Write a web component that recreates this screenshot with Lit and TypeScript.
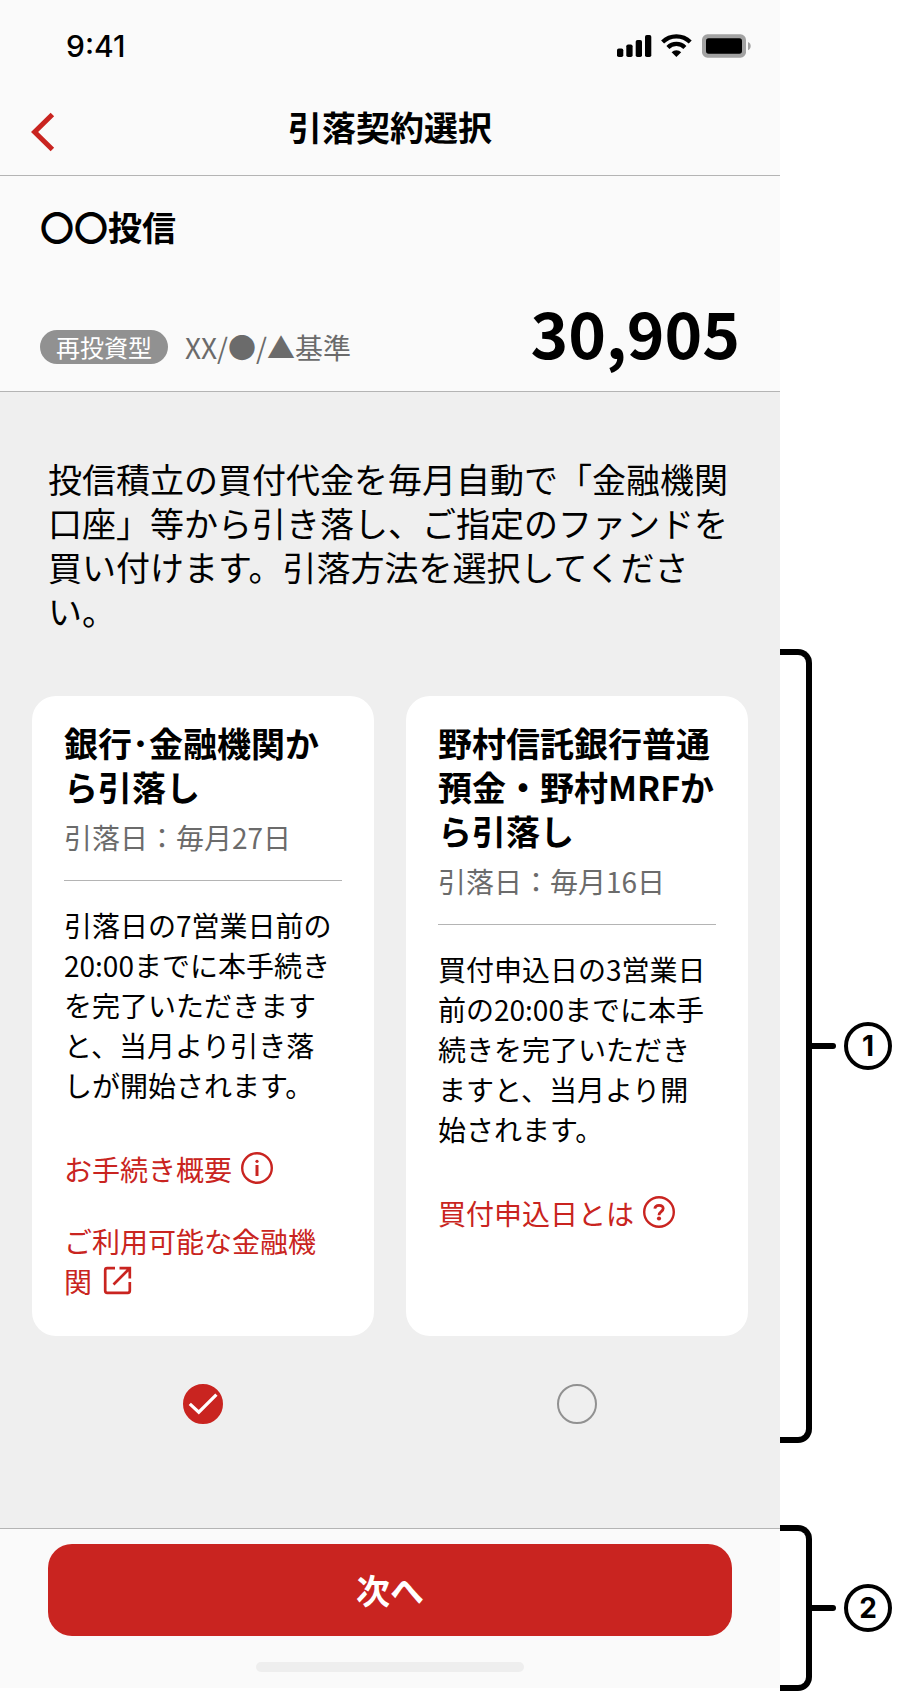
import { LitElement, html, css, svg, nothing } from "lit";
import { customElement, property, state } from "lit/decorators.js";

const baseText = css`
  :host {
    display: block;
    font-family: "Noto Sans CJK JP", "Noto Sans", sans-serif;
    color: #000;
  }
  * {
    box-sizing: border-box;
  }
  h1, h2, h3, p {
    margin: 0;
  }
`;

type IconName = "info" | "help" | "external";

const icons: Record<IconName, unknown> = {
  info: svg`
    <circle cx="16" cy="16" r="14.8" fill="none" stroke="currentColor" stroke-width="2.4"/>
    <circle cx="16" cy="9.3" r="1.6" fill="currentColor"/>
    <path d="M16 13v11" fill="none" stroke="currentColor" stroke-width="3"/>`,
  help: svg`
    <circle cx="16" cy="16" r="14.8" fill="none" stroke="currentColor" stroke-width="2.4"/>
    <path d="M11.8 12.6C12.1 10.5 13.7 9.3 16 9.3c2.5 0 4.2 1.4 4.2 3.3 0 3-4.2 3.1-4.2 6.6" fill="none" stroke="currentColor" stroke-width="2.8"/>
    <circle cx="16" cy="22.5" r="2.1" fill="currentColor"/>`,
  external: svg`
    <path d="M14 4.2H6.2a2 2 0 0 0-2 2v20.6a2 2 0 0 0 2 2h20.6a2 2 0 0 0 2-2V18" fill="none" stroke="currentColor" stroke-width="2.7"/>
    <path d="M18.5 4.2h10.3v10.3M28 5 12.5 20.5" fill="none" stroke="currentColor" stroke-width="2.7"/>`,
};

interface PlanLink {
  text: string;
  icon: IconName;
}

interface Plan {
  id: string;
  title: string;
  date: string;
  body: string;
  links: PlanLink[];
}

const plans: Plan[] = [
  {
    id: "bank",
    title: "銀行･金融機関から引落し",
    date: "引落日：毎月27日",
    body: "引落日の7営業日前の20:00までに本手続きを完了いただきますと、当月より引き落しが開始されます。",
    links: [
      { text: "お手続き概要", icon: "info" },
      { text: "ご利用可能な金融機関", icon: "external" },
    ],
  },
  {
    id: "trust",
    title: "野村信託銀行普通預金・野村MRFから引落し",
    date: "引落日：毎月16日",
    body: "買付申込日の3営業日前の20:00までに本手続きを完了いただきますと、当月より開始されます。",
    links: [{ text: "買付申込日とは", icon: "help" }],
  },
];

@customElement("status-bar")
class StatusBar extends LitElement {
  static styles = [
    baseText,
    css`
      .bar {
        display: flex;
        justify-content: space-between;
        align-items: center;
        height: 92px;
        padding: 0 28px 0 66px;
      }
      .time {
        font: 500 30px/36px Inter, sans-serif;
      }
      .icons {
        display: block;
        width: 136px;
        height: 24px;
      }
    `,
  ];

  render() {
    return html`
      <div class="bar">
        <span class="time">9:41</span>
        <svg class="icons" viewBox="0 0 136 24" aria-hidden="true">
          <rect x="1" y="14.5" width="6.3" height="8.5" rx="1.8"/>
          <rect x="10.3" y="10.5" width="6.3" height="12.5" rx="1.8"/>
          <rect x="19.7" y="6" width="6.3" height="17" rx="1.8"/>
          <rect x="29" y="1" width="6.3" height="22" rx="1.8"/>
          <g fill="none" stroke="#000" stroke-width="4.2">
            <path d="M46.6 8.1a19.4 19.4 0 0 1 27.6 0"/>
            <path d="M51.9 13.4a12 12 0 0 1 17 0"/>
          </g>
          <path d="M55.6 18.2a7 7 0 0 1 9.6 0L60.4 23Z"/>
          <rect x="86" y="0.3" width="44" height="23.4" rx="5.5" fill="#a2a2a2"/>
          <rect x="90" y="4.3" width="36" height="15.4" rx="2.6"/>
          <path d="M132 8c3.6 1.2 3.6 7 0 8.2Z" fill="#a2a2a2"/>
        </svg>
      </div>
    `;
  }
}

@customElement("plan-card")
class PlanCard extends LitElement {
  @property({ attribute: false }) plan!: Plan;
  @property({ type: Boolean }) selected = false;

  static styles = [
    baseText,
    css`
      :host {
        display: flex;
        flex-direction: column;
        gap: 48px;
      }
      .card {
        flex: 1;
        padding: 25px 32px 35px;
        border-radius: 24px;
        background: #fff;
      }
      .title {
        font-size: 34px;
        line-height: 44px;
        font-weight: 700;
      }
      .date {
        margin-top: 8px;
        padding-bottom: 23px;
        border-bottom: 1px solid #b4b4b4;
        font-size: 28px;
        line-height: 40px;
        color: #6b6b6b;
      }
      .body {
        margin: 24px 0 44px;
        font-size: 28px;
        line-height: 40px;
      }
      .links {
        display: flex;
        flex-direction: column;
        align-items: flex-start;
        gap: 32px;
      }
      .link {
        font-size: 28px;
        line-height: 40px;
        color: #c92420;
        text-decoration: none;
      }
      .icon {
        width: 32px;
        height: 32px;
        margin: 0 0 0 9px;
        vertical-align: -3px;
      }
      .pick {
        display: grid;
        align-self: center;
        cursor: pointer;
      }
      .radio,
      .tick {
        grid-area: 1 / 1;
        width: 40px;
        height: 40px;
        margin: 0;
      }
      .radio {
        appearance: none;
        border: 2px solid #919191;
        border-radius: 50%;
      }
      .radio:checked {
        border-color: #c92420;
        background: #c92420;
      }
      .tick {
        z-index: 1;
        pointer-events: none;
      }
    `,
  ];

  private choose() {
    this.dispatchEvent(new CustomEvent("choose", { detail: this.plan.id }));
  }

  render() {
    const { title, date, body, links } = this.plan;
    return html`
      <article class="card">
        <h3 class="title" id="title">${title}</h3>
        <p class="date">${date}</p>
        <p class="body">${body}</p>
        <div class="links">
          ${links.map(
            (l) => html`<a class="link" href="#">${l.text}<svg class="icon" viewBox="0 0 32 32" aria-hidden="true">${icons[l.icon]}</svg></a>`,
          )}
        </div>
      </article>
      <label class="pick">
        <input
          class="radio"
          type="radio"
          name="plan"
          aria-labelledby="title"
          .checked=${this.selected}
          @change=${this.choose}
        />
        ${this.selected
          ? html`<svg class="tick" viewBox="0 0 40 40" aria-hidden="true">
              <path d="M6.8 19.8 15.8 28.2 33.4 10.6" fill="none" stroke="#fff" stroke-width="3.2"/>
            </svg>`
          : nothing}
      </label>
    `;
  }
}

@customElement("note-bracket")
class NoteBracket extends LitElement {
  @property() number = "";

  static styles = [
    baseText,
    css`
      :host {
        display: flex;
        align-items: center;
      }
      .bracket {
        align-self: stretch;
        width: 32px;
        border: 6px solid #000;
        border-left: 0;
        border-radius: 0 14px 14px 0;
      }
      .tick {
        width: 24px;
        height: 6px;
        margin-right: 8px;
        border-radius: 0 3px 3px 0;
        background: #000;
      }
      .number {
        width: 48px;
        height: 48px;
        border: 4px solid #000;
        border-radius: 50%;
        font: 700 28px/40px Inter, sans-serif;
        text-align: center;
      }
    `,
  ];

  render() {
    return html`
      <span class="bracket"></span>
      <span class="tick"></span>
      <span class="number">${this.number}</span>
    `;
  }
}

@customElement("app-root")
class AppRoot extends LitElement {
  @state() private selected = "bank";

  static styles = [
    baseText,
    css`
      .page {
        display: grid;
        grid-template-columns: minmax(0, 1fr) 136px;
        padding-bottom: 3px;
        background: #fff;
      }
      .top,
      .options,
      .spacer,
      .footer {
        grid-column: 1;
      }
      .top,
      .options,
      .spacer {
        background: #efefef;
      }
      .nav,
      .fund,
      .footer {
        background: #fafafa;
      }
      .nav,
      .fund {
        border-bottom: 1px solid #b4b4b4;
      }
      .nav-row {
        display: grid;
        grid-template-columns: 40px 1fr 40px;
        padding: 13px 24px 20px;
      }
      .back {
        width: 40px;
        height: 50px;
        padding: 0;
        border: 0;
        background: none;
        cursor: pointer;
      }
      .chevron {
        display: block;
        width: 40px;
        height: 50px;
      }
      .title,
      .fund-name {
        font-size: 34px;
        line-height: 44px;
        font-weight: 700;
      }
      .title {
        text-align: center;
      }
      .fund {
        padding: 29px 40px 24px;
      }
      .fund-row {
        display: flex;
        align-items: flex-end;
        justify-content: space-between;
        margin-top: 46px;
      }
      .fund-meta {
        display: flex;
        align-items: center;
        gap: 17px;
      }
      .badge {
        padding: 0 16px;
        border-radius: 17px;
        background: #919191;
        color: #fff;
        font-size: 24px;
        line-height: 34px;
      }
      .basis {
        font-size: 28px;
        line-height: 40px;
        color: #6b6b6b;
      }
      .price {
        font-size: 64px;
        line-height: 72px;
        font-weight: 700;
      }
      .lead {
        padding: 65px 48px 16px;
        font-size: 34px;
        line-height: 44px;
      }
      .options {
        display: grid;
        grid-template-columns: 1fr 1fr;
        gap: 32px;
        padding: 47px 32px 19px;
      }
      .spacer {
        height: 85px;
      }
      .footer {
        padding: 15px 48px 16px;
        border-top: 1px solid #b4b4b4;
      }
      .next {
        display: block;
        width: 100%;
        height: 92px;
        padding: 0;
        border: 0;
        border-radius: 24px;
        background: #c92420;
        color: #fff;
        font: inherit;
        font-size: 34px;
        line-height: 44px;
        font-weight: 700;
        cursor: pointer;
      }
      .home {
        width: 268px;
        height: 10px;
        margin: 26px auto 0;
        border-radius: 5px;
        background: #eee;
      }
      .note-footer {
        margin: -3px 0;
      }
    `,
  ];

  render() {
    return html`
      <main class="page">
        <div class="top">
          <header class="nav">
            <status-bar></status-bar>
            <div class="nav-row">
              <button class="back" aria-label="戻る">
                <svg class="chevron" viewBox="0 0 40 50" aria-hidden="true">
                  <path d="M28.4 9.5 10.6 27 28.4 44.5" fill="none" stroke="#c92420" stroke-width="5"/>
                </svg>
              </button>
              <h1 class="title">引落契約選択</h1>
            </div>
          </header>
          <section class="fund">
            <h2 class="fund-name">〇〇投信</h2>
            <div class="fund-row">
              <div class="fund-meta">
                <span class="badge">再投資型</span>
                <span class="basis">XX/●/▲基準</span>
              </div>
              <span class="price">30,905</span>
            </div>
          </section>
          <p class="lead">
            投信積立の買付代金を毎月自動で「金融機関口座」等から引き落し、ご指定のファンドを買い付けます。引落方法を選択してください。
          </p>
        </div>
        <section class="options">
          ${plans.map(
            (p) => html`<plan-card
              .plan=${p}
              .selected=${this.selected === p.id}
              @choose=${(e: CustomEvent<string>) => (this.selected = e.detail)}
            ></plan-card>`,
          )}
        </section>
        <note-bracket number="1"></note-bracket>
        <div class="spacer"></div>
        <footer class="footer">
          <button class="next">次へ</button>
          <div class="home"></div>
        </footer>
        <note-bracket class="note-footer" number="2"></note-bracket>
      </main>
    `;
  }
}
